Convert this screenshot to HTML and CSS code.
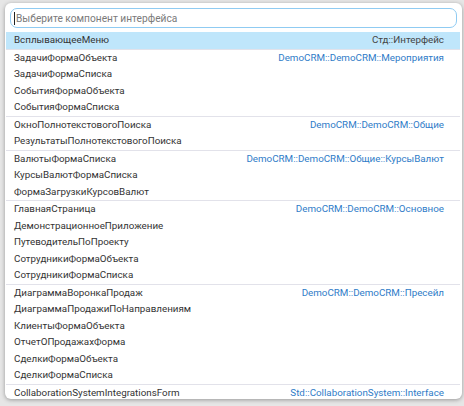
FILE: index.html
```html
<!DOCTYPE html>
<html lang="ru">
<head>
<meta charset="utf-8">
<link rel="stylesheet" href="styles.css">
</head>
<body>
<div class="popup">
  <div class="search"><span class="caret"></span><span class="placeholder">Выберите компонент интерфейса</span></div>
  <div class="list">
    <div class="group">
      <div class="row active"><span>ВсплывающееМеню</span><span class="ns dark">Стд::Интерфейс</span></div>
    </div>
    <div class="group">
      <div class="row"><span>ЗадачиФормаОбъекта</span><span class="ns">DemoCRM::DemoCRM::Мероприятия</span></div>
      <div class="row"><span>ЗадачиФормаСписка</span></div>
      <div class="row"><span>СобытияФормаОбъекта</span></div>
      <div class="row"><span>СобытияФормаСписка</span></div>
    </div>
    <div class="group">
      <div class="row"><span>ОкноПолнотекстовогоПоиска</span><span class="ns">DemoCRM::DemoCRM::Общие</span></div>
      <div class="row"><span>РезультатыПолнотекстовогоПоиска</span></div>
    </div>
    <div class="group">
      <div class="row"><span>ВалютыФормаСписка</span><span class="ns">DemoCRM::DemoCRM::Общие::КурсыВалют</span></div>
      <div class="row"><span>КурсыВалютФормаСписка</span></div>
      <div class="row"><span>ФормаЗагрузкиКурсовВалют</span></div>
    </div>
    <div class="group">
      <div class="row"><span>ГлавнаяСтраница</span><span class="ns">DemoCRM::DemoCRM::Основное</span></div>
      <div class="row"><span>ДемонстрационноеПриложение</span></div>
      <div class="row"><span>ПутеводительПоПроекту</span></div>
      <div class="row"><span>СотрудникиФормаОбъекта</span></div>
      <div class="row"><span>СотрудникиФормаСписка</span></div>
    </div>
    <div class="group">
      <div class="row"><span>ДиаграммаВоронкаПродаж</span><span class="ns">DemoCRM::DemoCRM::Пресейл</span></div>
      <div class="row"><span>ДиаграммаПродажиПоНаправлениям</span></div>
      <div class="row"><span>КлиентыФормаОбъекта</span></div>
      <div class="row"><span>ОтчетОПродажахФорма</span></div>
      <div class="row"><span>СделкиФормаОбъекта</span></div>
      <div class="row"><span>СделкиФормаСписка</span></div>
    </div>
    <div class="group">
      <div class="row"><span>CollaborationSystemIntegrationsForm</span><span class="ns">Std::CollaborationSystem::Interface</span></div>
    </div>
  </div>
</div>
</body>
</html>
```
FILE: styles.css
```css
html, body {
  margin: 0;
  padding: 0;
}
body {
  width: 464px;
  height: 406px;
  background: #e6e6e6;
  font-family: Roboto, "Noto Sans", sans-serif;
  font-size: 9.8px;
  color: #333;
  overflow: hidden;
}
.popup {
  margin: 3px 2px 0 5px;
  width: 457px;
  height: 396px;
  background: #fff;
  border-radius: 6px;
  box-shadow: 0 1px 4px rgba(0,0,0,0.35);
  box-sizing: border-box;
  padding-top: 5px;
  overflow: hidden;
}
.search {
  margin: 0 5px 4px 5px;
  height: 20px;
  box-sizing: border-box;
  border: 1px solid #8fcbf2;
  border-radius: 7px;
  display: flex;
  align-items: center;
  padding-left: 3px;
  font-size: 10.2px;
}
.caret {
  width: 1px;
  height: 13px;
  background: #222;
  margin-right: 1px;
}
.placeholder {
  color: #7a7a7a;
}
.list {
  margin: 0 2px 0 1px;
}
.group + .group {
  border-top: 1px solid #e2e2ea;
}
.row {
  display: flex;
  justify-content: space-between;
  height: 16.5px;
  line-height: 16.5px;
  padding: 0 16px 0 8px;
  white-space: nowrap;
}
.row.active {
  background: #bfe6fb;
}
.ns {
  color: #2f7cc8;
}
.ns.dark {
  color: #444;
}
```
